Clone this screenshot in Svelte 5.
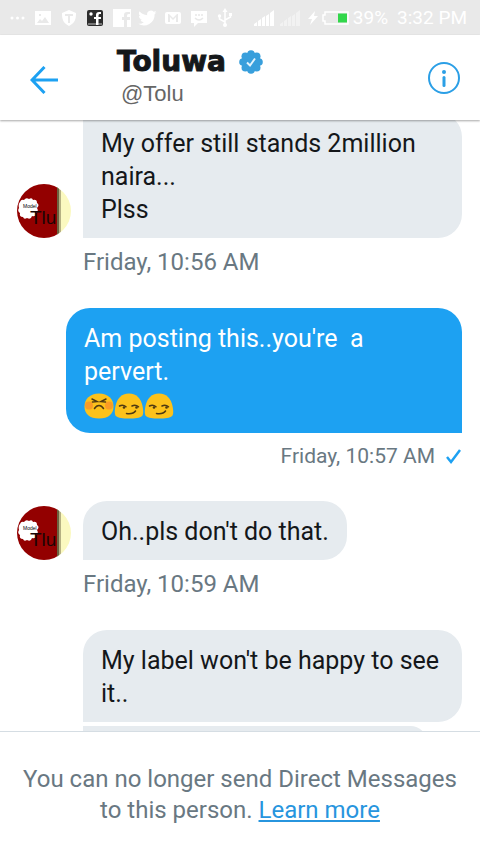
<script lang="ts">
	type Message = {
		text?: string;
		own?: boolean;
		continued?: boolean;
		avatar?: boolean;
		time?: string;
		width?: number;
		emoji?: ('angry' | 'smirk')[];
	};

	const messages: Message[] = [
		{
			text: 'My offer still stands 2million naira...\nPlss',
			continued: true,
			avatar: true,
			time: 'Friday, 10:56 AM'
		},
		{
			text: "Am posting this..you're  a pervert.\n",
			own: true,
			time: 'Friday, 10:57 AM',
			emoji: ['angry', 'smirk', 'smirk']
		},
		{ text: "Oh..pls don't do that.", avatar: true, time: 'Friday, 10:59 AM' },
		{ text: "My label won't be happy to see it.." },
		{ continued: true, width: 344 }
	];
</script>

{#snippet emojiIcon(kind: 'angry' | 'smirk')}
	<svg class="emoji" viewBox="0 0 30 26" role="img" aria-label={kind}>
		{#if kind === 'angry'}
			<path
				d="M15 .5C24 .5 29.5 6 29.5 13.5 29.5 21 24.500 25.500 15 25.500S.5 21 .5 13.500C.5 6 6 .5 15 .5z"
				fill="#fcc21b"
			/>
			<circle cx="5" cy="12.500" r="4" fill="#f98d2b" opacity=".75" />
			<circle cx="25" cy="12.500" r="4" fill="#f98d2b" opacity=".75" />
			<path
				d="M8 6l5 2.500-4.500.5M22 6l-5 2.500 4.500.5M10.500 15.500c2.500-4 6.500-4 9 0"
				fill="none"
				stroke="#4f3a12"
				stroke-width="1.500"
				stroke-linecap="round"
			/>
		{:else}
			<path
				d="M15 .5C23 .5 27 6 28.500 13c.8 4 1.300 8-.5 10-2 2-7 2.500-13 2.500S4 25 2 23c-1.800-2-1.300-6-.5-10C3 6 7 .5 15 .5z"
				fill="#fcc21b"
			/>
			<path
				d="M5.500 13c2-1.200 4.500-1 6.500.8M18 13c2-1.200 4.500-1 6.500.8M12.500 20.500c4 .5 7.500-.2 9-2.500"
				fill="none"
				stroke="#4f3a12"
				stroke-width="1.500"
				stroke-linecap="round"
			/>
			<circle cx="10" cy="14.500" r="1.300" fill="#4f3a12" />
			<circle cx="22.500" cy="14.500" r="1.300" fill="#4f3a12" />
		{/if}
	</svg>
{/snippet}

{#snippet avatar()}
	<svg class="avatar" viewBox="0 0 54 54" role="img" aria-label="Toluwa">
		<rect width="41" height="54" fill="#930000" />
		<rect x="40" width="14" height="54" fill="#fbf9c0" />
		<rect x="40" width="2" height="54" fill="#6b6240" />
		<rect x="42" width="2" height="54" fill="#b5b083" />
		<path
			d="M3 18q1-3 4-2 2-3 5-1 3-2 4 1 4-1 4 3 3 2 0 5 2 3-1 5 0 4-4 3-1 4-5 2-3 2-4-1-4 0-3-4-3-2-1-5-1-4 1-6z"
			fill="#fff"
		/>
		<text x="6" y="24" class="tag">Model</text>
		<text x="13" y="40" class="logo">Tlu</text>
	</svg>
{/snippet}

{#snippet bars()}
	<path d="M0 18v-2l3-2v4zM4 18v-5l3-2v7zM8 18v-8l3-2v10zM12 18V8l3-2v12zM16 18V5l4-3v16z" />
{/snippet}

<div class="screen">
	<div class="status">
		<svg width="15" height="20" viewBox="0 0 15 20" fill="#fff">
			<circle cx="2" cy="10" r="1.500" />
			<circle cx="7.500" cy="10" r="1.500" />
			<circle cx="13" cy="10" r="1.500" />
		</svg>
		<svg width="16" height="20" viewBox="0 0 16 20">
			<path d="M0 3h16v14H0zM2 15h12l-4-6-3 4-2-2zM4 6v2h2V6z" fill="#fff" fill-rule="evenodd" />
		</svg>
		<svg width="16" height="20" viewBox="0 0 16 20">
			<path
				d="M8 2l7 3c0 6-1 10-7 13C2 15 1 11 1 5zM4 6v2h3v7h2V8h3V6z"
				fill="#fff"
				fill-rule="evenodd"
			/>
		</svg>
		<svg width="16" height="20" viewBox="0 0 16 20">
			<rect y="2" width="16" height="16" rx="2" fill="#2c2c2c" />
			<rect x="1" y="15" width="14" height="2" fill="#777" />
			<path d="M9 17v-6H7V9h2V7q0-3 3-3h2v2h-1.500q-1 0-1 1.500V9H14v2h-2.500v6z" fill="#fff" />
			<circle cx="4" cy="6" r="1.700" fill="#fff" />
		</svg>
		<svg width="16" height="20" viewBox="0 0 16 20">
			<path
				d="M0 1h18v18h-4v-7h3V9h-3V7.500q0-1.500 1.500-1.500H17V4h-3q-3 0-3 3v2H9v3h2v7H0z"
				fill="#fff"
			/>
		</svg>
		<svg width="16" height="20" viewBox="1 1 21 22">
			<path
				d="M24 4.600a10 10 0 0 1-2.800.8 5 5 0 0 0 2.100-2.700 10 10 0 0 1-3.100 1.200 4.900 4.900 0 0 0-8.400 4.500A14 14 0 0 1 1.700 3.200a4.900 4.900 0 0 0 1.500 6.500 5 5 0 0 1-2.200-.6 4.900 4.900 0 0 0 3.900 4.900 5 5 0 0 1-2.200.1 4.900 4.900 0 0 0 4.600 3.400A10 10 0 0 1 0 19.500a14 14 0 0 0 21.500-12.400A10 10 0 0 0 24 4.600z"
				fill="#fff"
			/>
		</svg>
		<svg width="16" height="20" viewBox="0 0 16 20">
			<path
				d="M2 4h12q2 0 2 2v8q0 2-2 2H2q-2 0-2-2V6q0-2 2-2zm1 2v8h2V9l3 3 3-3v5h2V6h-1l-4 4-4-4z"
				fill="#fff"
				fill-rule="evenodd"
			/>
		</svg>
		<svg width="16" height="20" viewBox="0 0 16 20">
			<path d="M0 3h16v12H7l-4 4v-4H0z" fill="#fff" />
			<path
				d="M4 7h2M7 7h2M10 7h2M4 10q4 4 8 0"
				fill="none"
				stroke="#e8e8e8"
				stroke-width="1.500"
			/>
		</svg>
		<svg width="16" height="20" viewBox="0 0 16 20" fill="none" stroke="#fff" stroke-width="1.500">
			<path d="M8 3v14M8 14L2.500 11V8M8 12l5.500-3V6" />
			<path d="M5.500 4L8 0l2.500 4z" fill="#fff" stroke="none" />
			<circle cx="8" cy="17" r="2" fill="#fff" stroke="none" />
			<circle cx="2.500" cy="8" r="1" fill="#fff" />
			<path d="M12 5h3v3h-3z" fill="#fff" stroke="none" />
		</svg>
		<div class="system">
			<svg width="20" height="20" viewBox="0 0 20 20" fill="#fff">{@render bars()}</svg>
			<svg class="faint" width="20" height="20" viewBox="0 0 20 20" fill="#fff">
				{@render bars()}
			</svg>
			<svg class="bolt" width="10" height="20" viewBox="0 0 10 20">
				<path d="M7 3L0 11h4l-2 6 8-9H6z" fill="#fff" />
			</svg>
			<svg width="27" height="20" viewBox="0 0 27 20">
				<path d="M3 4h23v12H3v-3H1V7h2z" fill="none" stroke="#fff" stroke-width="1.500" />
				<rect x="16" y="5.500" width="9" height="9" fill="#32d74b" />
			</svg>
			<span>39%</span>
			<span class="clock">3:32 PM</span>
		</div>
	</div>

	<header>
		<button class="back" aria-label="Back">
			<svg width="28" height="28" viewBox="0 0 28 28" fill="none" stroke="#1da1f2">
				<path d="M28 14H2M14.500 1L2 14l12.500 13" stroke-width="3" />
			</svg>
		</button>
		<div class="who">
			<h1>
				Toluwa
				<svg width="24" height="24" viewBox="0 0 24 24" role="img" aria-label="Verified">
					<g fill="#389fdc">
						<circle cx="12" cy="12" r="9.500" />
						<circle cx="12" cy="4" r="3.800" />
						<circle cx="17.700" cy="6.300" r="3.800" />
						<circle cx="20" cy="12" r="3.800" />
						<circle cx="17.700" cy="17.700" r="3.800" />
						<circle cx="12" cy="20" r="3.800" />
						<circle cx="6.300" cy="17.700" r="3.800" />
						<circle cx="4" cy="12" r="3.800" />
						<circle cx="6.300" cy="6.300" r="3.800" />
					</g>
					<path d="M8 12.500l3 3 5-7" fill="none" stroke="#e3f3fc" stroke-width="2" />
				</svg>
			</h1>
			<p>@Tolu</p>
		</div>
		<button aria-label="Conversation info">
			<svg width="32" height="32" viewBox="0 0 32 32">
				<circle cx="16" cy="16" r="15" fill="none" stroke="#2b9fe6" stroke-width="2" />
				<circle cx="16" cy="10" r="2" fill="#2b9fe6" />
				<path d="M16 15.500v8" stroke="#2b9fe6" stroke-width="3" stroke-linecap="round" />
			</svg>
		</button>
	</header>

	<main>
		{#each messages as message}
			<article
				class:own={message.own}
				class:timed={message.time}
				class:continued={message.continued}
			>
				<div class="row">
					{#if !message.own}
						<div class="side">
							{#if message.avatar}{@render avatar()}{/if}
						</div>
					{/if}
					<p class="bubble" style:width={message.width ? `${message.width}px` : null}>
						{message.text ?? ''}{#each message.emoji ?? [] as kind}{@render emojiIcon(kind)}{/each}
					</p>
				</div>
				{#if message.time}
					<div class="time">
						<time>{message.time}</time>
						{#if message.own}
							<svg width="17" height="17" viewBox="0 0 17 17" role="img" aria-label="Sent">
								<path d="M2 9l4 5L15 2" fill="none" stroke="#1da1f2" stroke-width="2.500" />
							</svg>
						{/if}
					</div>
				{/if}
			</article>
		{/each}
	</main>

	<footer>
		You can no longer send Direct Messages to this person. <a href="#learn">Learn more</a>
	</footer>
</div>

<style>
	:global(body) {
		margin: 0;
		background: #fff;
	}
	.screen {
		display: flex;
		flex-direction: column;
		height: 100vh;
		font-family: Roboto, 'Liberation Sans', sans-serif;
		color: #14171a;
	}
	h1,
	p {
		margin: 0;
	}
	svg {
		flex: none;
	}
	button {
		display: flex;
		padding: 0;
		border: 0;
		background: none;
		cursor: pointer;
	}

	.status {
		display: flex;
		align-items: center;
		gap: 10px;
		height: 35px;
		flex: none;
		padding: 0 13px 0 10px;
		background: #e9e9e9;
		color: #fff;
		font-size: 19px;
	}
	.status svg {
		overflow: visible;
	}
	.system {
		display: flex;
		align-items: center;
		gap: 4px;
		margin-left: auto;
		white-space: nowrap;
	}
	.faint {
		margin-left: 2px;
		opacity: 0.4;
	}
	.bolt {
		margin-left: 4px;
	}
	.clock {
		margin-left: 5px;
	}

	header {
		display: flex;
		align-items: center;
		flex: none;
		height: 85px;
		padding: 0 20px 0 30px;
		box-sizing: border-box;
		background: #fff;
		box-shadow: 0 1px 2px rgba(0, 0, 0, 0.35);
		z-index: 1;
	}
	.back {
		margin-top: 4px;
	}
	.who {
		flex: 1;
		margin-left: 59px;
	}
	h1 {
		display: flex;
		align-items: center;
		gap: 13px;
		font-family: 'DejaVu Sans', sans-serif;
		font-size: 28px;
		font-weight: 700;
		line-height: 32px;
		-webkit-text-stroke: 1px #14171a;
	}
	.who p {
		padding-left: 4px;
		font-family: 'Liberation Sans', Arial, sans-serif;
		font-size: 22px;
		line-height: 32px;
		color: #666;
	}

	main {
		flex: 1;
		min-height: 0;
		overflow: hidden;
		padding: 0 18px 0 17px;
	}
	article {
		margin-bottom: 4px;
	}
	/* the thread is scrolled a little under the header */
	article:first-child {
		margin-top: -7px;
	}
	.timed {
		margin-bottom: 32px;
	}
	.row {
		display: flex;
		align-items: flex-end;
	}
	.side {
		flex: none;
		width: 66px;
	}
	.avatar {
		display: block;
		width: 54px;
		height: 54px;
		border-radius: 50%;
	}
	.tag {
		font: 5px 'Liberation Sans', sans-serif;
	}
	.logo {
		font: 19px 'Liberation Sans', sans-serif;
		fill: #1c0505;
	}
	.bubble {
		min-height: 33px;
		padding: 14px 18px 12px;
		box-sizing: border-box;
		border-radius: 24px 24px 24px 0;
		background: #e6ebef;
		font-size: 25px;
		line-height: 33px;
		white-space: pre-wrap;
	}
	.continued .bubble {
		border-top-left-radius: 0;
	}
	.own .row {
		margin-left: 49px;
		justify-content: flex-end;
	}
	.own .bubble {
		border-radius: 24px 24px 0 24px;
		background: #1da1f2;
		color: #fff;
	}
	.emoji {
		width: 30px;
		height: 26px;
		vertical-align: middle;
	}
	.time {
		display: flex;
		align-items: center;
		margin: 11px 0 0 66px;
		font-size: 24px;
		line-height: 27px;
		color: #697882;
	}
	.own .time {
		justify-content: flex-end;
		gap: 10px;
		margin-top: 10px;
		font-size: 21px;
	}
	.own {
		margin-bottom: 31px;
	}

	footer {
		flex: none;
		padding: 32px 16px 28px;
		border-top: 1px solid #d5dde3;
		background: #fff;
		font-size: 24px;
		line-height: 31px;
		text-align: center;
		color: #697882;
	}
	a {
		color: #2795de;
	}
</style>
